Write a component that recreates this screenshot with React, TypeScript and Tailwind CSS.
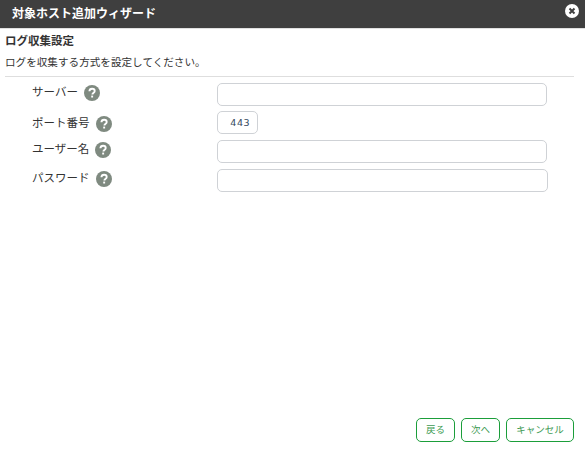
const font = { fontFamily: '"DejaVu Sans", "Noto Sans CJK JP", sans-serif' };

function Help() {
  return (
    <svg width="16" height="16" viewBox="0 0 16 16" className="shrink-0">
      <circle cx="8" cy="8" r="8" fill="#7f8a80" />
      <path d="M5.4 6.2C5.5 4.6 6.6 3.7 8.1 3.7c1.5 0 2.6.9 2.6 2.2 0 1-.5 1.5-1.3 2-.7.5-1 .8-1 1.6" fill="none" stroke="#fff" strokeWidth="1.9" />
      <rect x="7.2" y="10.6" width="1.9" height="1.9" fill="#fff" />
    </svg>
  );
}

function Row({ label, width, value, h, labelTop }: { label: string; width: string; value?: string; h: string; labelTop: string }) {
  return (
    <div className={`flex items-start ${h}`}>
      <div className={`w-[212px] pl-[27px] flex items-center gap-[6px] text-[11.5px] text-[#333] ${labelTop}`}>
        <span>{label}</span>
        <Help />
      </div>
      <div className={`${width} h-[23px] border border-[#cfd2d6] rounded-[5px] bg-white text-[9.5px] font-normal text-[#34495e] text-right pr-[7px] leading-[21px] tracking-[0.5px]`}>{value}</div>
    </div>
  );
}

function Btn({ children, w }: { children: string; w: string }) {
  return (
    <button className={`${w} h-[24px] border-[1.5px] border-[#1b9e3a] rounded-[5px] bg-white text-[9.5px] text-[#3d9a52] flex items-center justify-center`}>{children}</button>
  );
}

export default function App() {
  return (
    <div style={font} className="w-[585px] h-[451px] bg-white flex flex-col overflow-hidden">
      <div className="h-[28px] shrink-0 bg-[#3f3f3f] flex items-center justify-between pl-[12px] pr-[6px]">
        <span className="text-[12px] font-bold text-white">対象ホスト追加ウィザード</span>
        <svg width="14" height="14" viewBox="0 0 14 14" className="mb-[6px]">
          <circle cx="7" cy="7" r="7" fill="#fff" />
          <path d="M4.5 4.5l5 5M9.5 4.5l-5 5" stroke="#3f3f3f" strokeWidth="2" />
        </svg>
      </div>
      <div className="h-[1px] shrink-0 bg-[#e0e0e0]" />
      <div className="flex-1 flex flex-col px-[5px]">
        <div className="mt-[4px] text-[11.5px] font-bold text-[#333] leading-[16px]">ログ収集設定</div>
        <div className="mt-[6px] text-[10.6px] text-[#333] leading-[14px]">ログを収集する方式を設定してください。</div>
        <div className="mt-[7px] h-[1px] bg-[#dedede] w-[569px]" />
        <div className="mt-[6px] flex flex-col">
          <Row label="サーバー" width="w-[330px]" h="h-[28px]" labelTop="pt-[1px]" />
          <Row label="ポート番号" width="w-[41px]" value="443" h="h-[29px]" labelTop="pt-[4px]" />
          <Row label="ユーザー名" width="w-[330px]" h="h-[29px]" labelTop="pt-[1px]" />
          <Row label="パスワード" width="w-[331px]" h="h-[29px]" labelTop="pt-[1px]" />
        </div>
        <div className="mt-auto mb-[9px] pr-[6px] flex justify-end gap-[6px]">
          <Btn w="w-[39px]">戻る</Btn>
          <Btn w="w-[39px]">次へ</Btn>
          <Btn w="w-[68px]">キャンセル</Btn>
        </div>
      </div>
    </div>
  );
}
